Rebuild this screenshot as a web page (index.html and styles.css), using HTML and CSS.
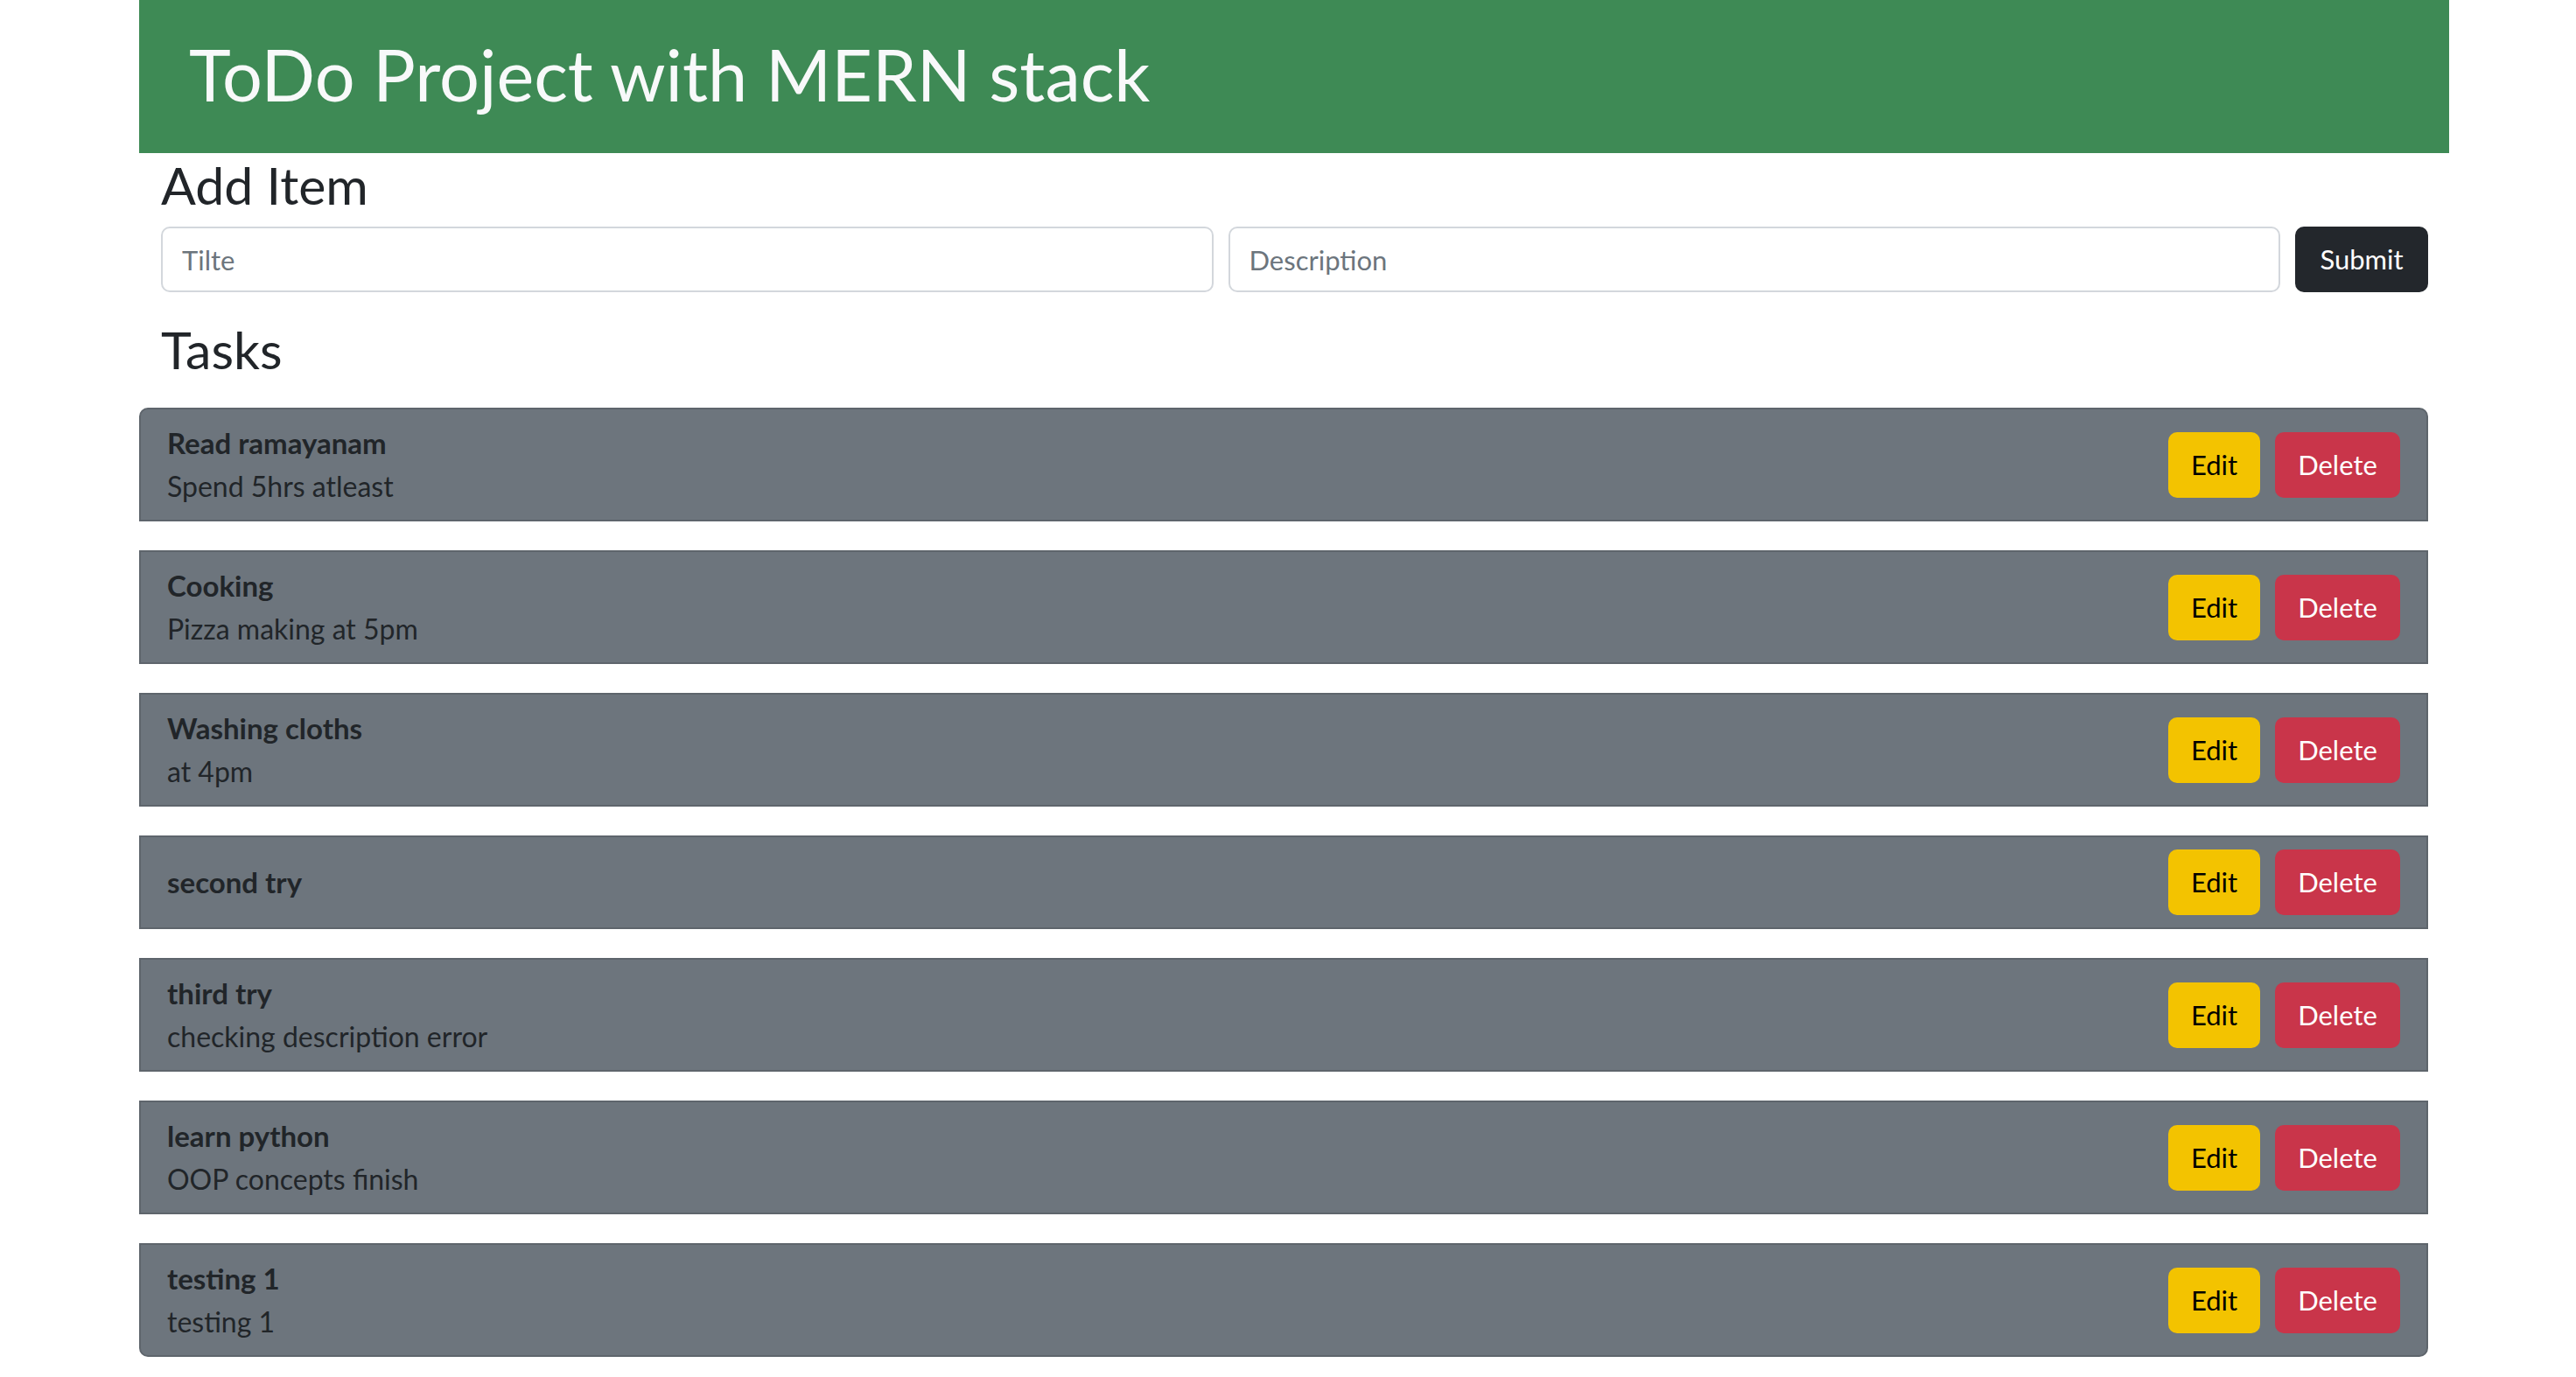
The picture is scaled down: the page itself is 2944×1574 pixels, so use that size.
FILE: index.html
```html
<!DOCTYPE html>
<html lang="en">
<head>
<meta charset="utf-8">
<title>ToDo Project with MERN stack</title>
<link rel="stylesheet" href="styles.css">
</head>
<body>
<div class="app">
  <header class="app-header">
    <h1 class="app-title">ToDo Project with MERN stack</h1>
  </header>
  <section class="add-section">
    <h2 class="section-title">Add Item</h2>
    <form class="add-form">
      <input class="field" type="text" placeholder="Tilte">
      <input class="field" type="text" placeholder="Description">
      <button class="btn btn-dark" type="button">Submit</button>
    </form>
    <h2 class="section-title tasks-title">Tasks</h2>
  </section>
  <ul class="task-list">
    <li class="task">
      <div class="task-text"><div class="task-name">Read ramayanam</div><div class="task-desc">Spend 5hrs atleast</div></div>
      <div class="task-actions"><button class="btn btn-edit">Edit</button><button class="btn btn-delete">Delete</button></div>
    </li>
    <li class="task">
      <div class="task-text"><div class="task-name">Cooking</div><div class="task-desc">Pizza making at 5pm</div></div>
      <div class="task-actions"><button class="btn btn-edit">Edit</button><button class="btn btn-delete">Delete</button></div>
    </li>
    <li class="task">
      <div class="task-text"><div class="task-name">Washing cloths</div><div class="task-desc">at 4pm</div></div>
      <div class="task-actions"><button class="btn btn-edit">Edit</button><button class="btn btn-delete">Delete</button></div>
    </li>
    <li class="task">
      <div class="task-text"><div class="task-name">second try</div></div>
      <div class="task-actions"><button class="btn btn-edit">Edit</button><button class="btn btn-delete">Delete</button></div>
    </li>
    <li class="task">
      <div class="task-text"><div class="task-name">third try</div><div class="task-desc">checking description error</div></div>
      <div class="task-actions"><button class="btn btn-edit">Edit</button><button class="btn btn-delete">Delete</button></div>
    </li>
    <li class="task">
      <div class="task-text"><div class="task-name">learn python</div><div class="task-desc">OOP concepts finish</div></div>
      <div class="task-actions"><button class="btn btn-edit">Edit</button><button class="btn btn-delete">Delete</button></div>
    </li>
    <li class="task">
      <div class="task-text"><div class="task-name">testing 1</div><div class="task-desc">testing 1</div></div>
      <div class="task-actions"><button class="btn btn-edit">Edit</button><button class="btn btn-delete">Delete</button></div>
    </li>
  </ul>
</div>
</body>
</html>
```
FILE: styles.css
```css
* { box-sizing: border-box; }
html, body { margin: 0; padding: 0; background: #ffffff; }
body {
  font-family: Lato, "Open Sans", "Liberation Sans", sans-serif;
  color: #212529;
  font-size: 31px;
  line-height: 49px;
}
.app {
  margin-left: 159px;
  width: 2640px;
}
.app-header {
  background: #3e8a55;
  height: 175px;
  padding: 36px 0 0 57px;
}
.app-title {
  margin: 0;
  font-size: 81px;
  line-height: 1.2;
  font-weight: 400;
  color: #f8f9fa;
}
.add-section {
  padding: 0 24px 0 25px;
}
.section-title {
  margin: 0;
  font-size: 59px;
  line-height: 74px;
  font-weight: 400;
  color: #212529;
}
.add-form {
  display: flex;
  gap: 17px;
  margin: 10px 0 29px;
  height: 75px;
}
.field {
  flex: 1 1 0;
  min-width: 0;
  height: 75px;
  border: 2px solid #d3d7dc;
  border-radius: 10px;
  padding: 0 22px;
  font-family: inherit;
  font-size: 31px;
  color: #212529;
  background: #fff;
}
.field::placeholder { color: #6c757d; }
.tasks-title { margin-bottom: 29px; }
.btn {
  font-family: inherit;
  font-size: 31px;
  line-height: 1;
  height: 75px;
  border: 0;
  border-radius: 10px;
  padding: 0 24px;
  cursor: pointer;
}
.btn-dark {
  width: 152px;
  background: #23272c;
  color: #ffffff;
}
.task-list {
  list-style: none;
  margin: 0 24px 0 0;
  padding: 0;
  display: flex;
  flex-direction: column;
  gap: 33px;
}
.task {
  display: flex;
  align-items: center;
  justify-content: space-between;
  background: #6d757d;
  border: 2px solid #5e656c;
  padding: 14px 30px;
}
.task:first-child { border-radius: 10px 10px 0 0; }
.task:last-child { border-radius: 0 0 10px 10px; }
.task-name {
  font-weight: 700;
  font-size: 33px;
}
.task-desc { font-size: 32px; }
.task-actions {
  display: flex;
  gap: 17px;
}
.btn-edit {
  width: 105px;
  padding: 0;
  background: #f3c300;
  color: #000000;
}
.btn-delete {
  width: 143px;
  padding: 0;
  background: #c9354a;
  color: #ffffff;
}
```
